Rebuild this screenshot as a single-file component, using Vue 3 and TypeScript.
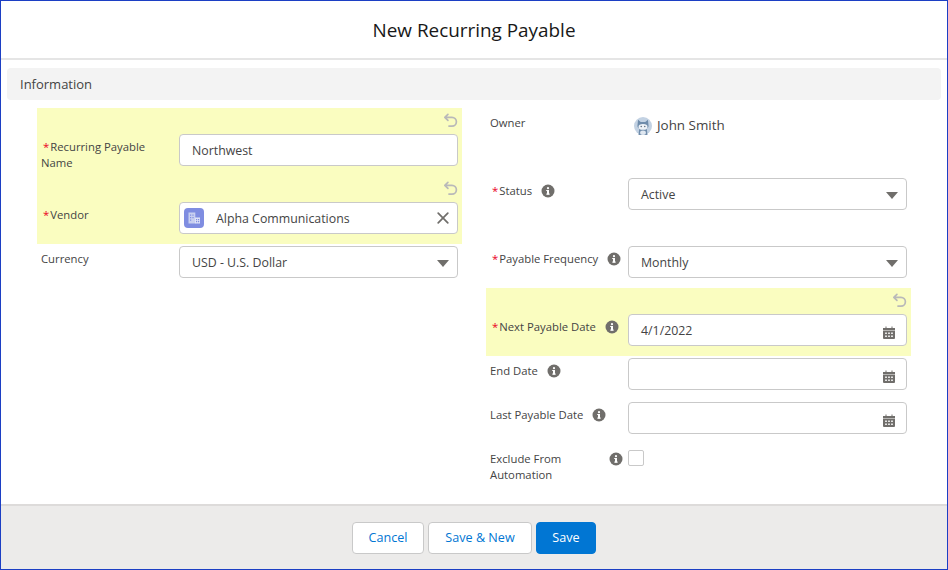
<script setup lang="ts">
interface Field {
  label: string[]
  required?: boolean
  info?: boolean
  changed?: boolean
  tall?: boolean
  kind: 'text' | 'lookup' | 'select' | 'date' | 'check' | 'owner'
  value?: string
}
const left: Field[] = [
  { label: ['Recurring Payable', 'Name'], required: true, changed: true, tall: true, kind: 'text', value: 'Northwest' },
  { label: ['Vendor'], required: true, changed: true, tall: true, kind: 'lookup', value: 'Alpha Communications' },
  { label: ['Currency'], kind: 'select', value: 'USD - U.S. Dollar' },
]
const right: Field[] = [
  { label: ['Owner'], kind: 'owner', value: 'John Smith' },
  { label: ['Status'], required: true, info: true, tall: true, kind: 'select', value: 'Active' },
  { label: ['Payable Frequency'], required: true, info: true, tall: true, kind: 'select', value: 'Monthly' },
  { label: ['Next Payable Date'], required: true, info: true, changed: true, tall: true, kind: 'date', value: '4/1/2022' },
  { label: ['End Date'], info: true, kind: 'date' },
  { label: ['Last Payable Date'], info: true, kind: 'date' },
  { label: ['Exclude From', 'Automation'], info: true, kind: 'check' },
]
const columns = [left, right]
</script>

<template>
  <div class="frame">
    <header class="head"><h1>New Recurring Payable</h1></header>
    <main class="body">
      <div class="section">Information</div>
      <div class="cols">
        <div v-for="(col, ci) in columns" :key="ci" class="col">
          <div
            v-for="f in col"
            :key="f.label[0]"
            class="field"
            :class="{ changed: f.changed, tall: f.tall, wrapinfo: f.kind === 'check' }"
          >
            <svg v-if="f.changed" class="undo" viewBox="0 0 14 14" aria-hidden="true">
              <path d="M4.600 1.200 1.700 4l2.900 2.800M2 4h6.400a3.900 3.900 0 0 1 0 8.200H5.600" fill="none" stroke="#b9b9b9" stroke-width="1.600" stroke-linecap="round" stroke-linejoin="round" />
            </svg>
            <div class="label">
              <span class="ltext">
                <template v-for="(line, i) in f.label" :key="line">
                  <span v-if="i === 0 && f.required" class="req">*</span>{{ line }}<br v-if="i < f.label.length - 1" />
                </template>
              </span>
              <svg v-if="f.info" class="info" viewBox="0 0 14 14" aria-hidden="true">
                <circle cx="7" cy="7" r="6.500" fill="#706e6b" />
                <rect x="6" y="6" width="2" height="4.600" fill="#fff" />
                <rect x="5.200" y="9.600" width="3.600" height="1" fill="#fff" />
                <rect x="5.200" y="6" width="1.400" height="1" fill="#fff" />
                <circle cx="7" cy="4.200" r="1.100" fill="#fff" />
              </svg>
            </div>
            <div v-if="f.kind === 'owner'" class="owner">
              <svg class="avatar" viewBox="0 0 20 20" aria-hidden="true">
                <circle cx="10" cy="10" r="10" fill="#c3d2e3" />
                <path d="M4.500 3 7.500 5.500h5L15.500 3l.7 7c0 1.300-.9 2.200-2 2.700l.8 7.300H5l.8-7.300c-1.100-.5-2-1.400-2-2.700z" fill="#6f8cab" />
                <ellipse cx="10" cy="11" rx="5" ry="3.200" fill="#eef2f7" />
                <ellipse cx="10" cy="17.500" rx="3.200" ry="2.500" fill="#dfe7f0" />
                <circle cx="8" cy="10.500" r=".8" fill="#567" />
                <circle cx="12" cy="10.500" r=".8" fill="#567" />
              </svg>
              <span>{{ f.value }}</span>
            </div>
            <div v-else-if="f.kind === 'check'" class="checkbox"></div>
            <div v-else class="input" :class="f.kind">
              <span v-if="f.kind === 'lookup'" class="vendor">
                <svg viewBox="0 0 20 20" aria-hidden="true">
                  <path d="M4.500 4.500h6.800v11H4.500z" fill="#c9d0f0" />
                  <path d="M6 6.500h1.200v1.200H6zm2.400 0h1.200v1.200H8.400zM6 9h1.200v1.200H6zm2.400 0h1.200v1.200H8.400zM6 11.500h1.200v1.200H6z" fill="#7f8de1" />
                  <path d="M11 9.500h5v6h-5z" fill="#dfe3f7" />
                  <path d="M12 11h1.200v1.200H12zm2 0h1.200v1.200H14zm-2 2h1.200v1.200H12zm2 0h1.200v1.200H14z" fill="#7f8de1" />
                </svg>
              </span>
              <span class="val">{{ f.value }}</span>
              <svg v-if="f.kind === 'lookup'" class="close" viewBox="0 0 12 12" aria-hidden="true">
                <path d="M1.200 1.200 10.800 10.800M10.800 1.200 1.200 10.800" stroke="#706e6b" stroke-width="1.700" stroke-linecap="round" />
              </svg>
              <span v-if="f.kind === 'select'" class="caret"></span>
              <svg v-if="f.kind === 'date'" class="cal" viewBox="0 0 12 13" aria-hidden="true">
                <path d="M0 2h2.500V.5h1V2h5V.5h1V2H12v2.500H0z" fill="#706e6b" />
                <path d="M0 5h12v7a1 1 0 0 1-1 1H1a1 1 0 0 1-1-1z" fill="#706e6b" />
                <path d="M2.200 6.500h1.600v1.400H2.200zm3 0h1.600v1.400H5.200zm3 0h1.600v1.400H8.200zm-6 3h1.600v1.400H2.200zm3 0h1.600v1.400H5.200zm3 0h1.600v1.400H8.200z" fill="#fff" />
              </svg>
            </div>
          </div>
        </div>
      </div>
    </main>
    <footer class="foot">
      <button class="btn cancel">Cancel</button>
      <button class="btn savenew">Save &amp; New</button>
      <button class="btn brand">Save</button>
    </footer>
  </div>
</template>

<style>
html, body { margin: 0; padding: 0; background: #fff; }
</style>

<style scoped>
.frame {
  box-sizing: border-box;
  width: 948px;
  height: 570px;
  border: 1px solid #1c3fc4;
  display: flex;
  flex-direction: column;
  font-family: "Open Sans", "Noto Sans", sans-serif;
  color: #444;
  background: #fff;
}
.head {
  height: 59px;
  flex: none;
  box-sizing: border-box;
  border-bottom: 2px solid #e5e5e5;
  display: flex;
  align-items: center;
  justify-content: center;
}
h1 {
  margin: 3px 0 0;
  font-size: 18.9px;
  font-weight: 400;
  color: #181818;
  line-height: 1.25;
}
.body { flex: 1; padding: 8px 6px 0; }
.section {
  height: 32px;
  line-height: 32px;
  padding-left: 13px;
  background: #f3f3f3;
  border-radius: 4px;
  font-size: 13px;
  color: #444;
}
.cols {
  display: grid;
  grid-template-columns: 425px 425px;
  column-gap: 24px;
  padding: 8px 0 0 30px;
}
.field {
  position: relative;
  box-sizing: border-box;
  height: 44px;
  padding: 2px 4px 0;
  display: flex;
  font-size: 11.3px;
}
.field.tall { height: 68px; padding-top: 26px; }
.changed { background: #fafdc0; }
.undo {
  position: absolute;
  right: 4px;
  top: 5px;
  width: 15px;
  height: 15px;
}
.label {
  width: 138px;
  flex: none;
  display: flex;
  justify-content: flex-start;
  align-items: flex-start;
  line-height: 16px;
  padding-top: 5px;
  box-sizing: border-box;
}
.ltext { white-space: nowrap; }
.req { color: #ea001e; margin: 0 1px 0 2px; }
.info {
  width: 14px;
  height: 14px;
  margin: 1px 0 0 9px;
  flex: none;
}
.wrapinfo .label { justify-content: space-between; padding-right: 5px; }
.input {
  box-sizing: border-box;
  width: 279px;
  height: 32px;
  border: 1px solid #c9c9c9;
  border-radius: 4px;
  background: #fff;
  display: flex;
  align-items: center;
  padding: 0 12px;
  font-size: 12.35px;
  color: #444;
  position: relative;
}
.lookup { padding-left: 4px; }
.vendor {
  width: 20px;
  height: 20px;
  border-radius: 4px;
  background: #7f8de1;
  margin-right: 12px;
  flex: none;
  display: flex;
}
.vendor svg { width: 20px; height: 20px; }
.val { flex: 1; white-space: nowrap; }
.close { width: 12px; height: 12px; margin-right: -4px; }
.caret {
  width: 0;
  height: 0;
  border-left: 6px solid transparent;
  border-right: 6px solid transparent;
  border-top: 7px solid #706e6b;
  margin-right: -4px;
  margin-top: 2px;
}
.cal { width: 12px; height: 13px; margin-right: -1px; margin-top: 4px; }
.owner {
  display: flex;
  align-items: center;
  gap: 5px;
  height: 32px;
  font-size: 13.4px;
  margin-left: 6px;
  padding-bottom: 2px;
  box-sizing: border-box;
}
.avatar { width: 18px; height: 18px; flex: none; margin-top: 2px; }
.checkbox {
  box-sizing: border-box;
  width: 16px;
  height: 16px;
  margin-top: 4px;
  border: 1px solid #c9c9c9;
  border-radius: 2px;
  background: #fff;
}
.foot {
  height: 65px;
  flex: none;
  box-sizing: border-box;
  border-top: 2px solid #dddbda;
  background: #ecebea;
  display: flex;
  justify-content: center;
  align-items: center;
  gap: 4px;
}
.btn {
  box-sizing: border-box;
  height: 32px;
  padding: 0;
  border: 1px solid #c9c9c9;
  border-radius: 4px;
  background: #fff;
  color: #0176d3;
  font: 12.6px "Open Sans", "Noto Sans", sans-serif;
}
.cancel { width: 72px; }
.savenew { width: 104px; }
.brand {
  width: 60px;
  background: #0176d3;
  border-color: #0176d3;
  color: #fff;
}
</style>
